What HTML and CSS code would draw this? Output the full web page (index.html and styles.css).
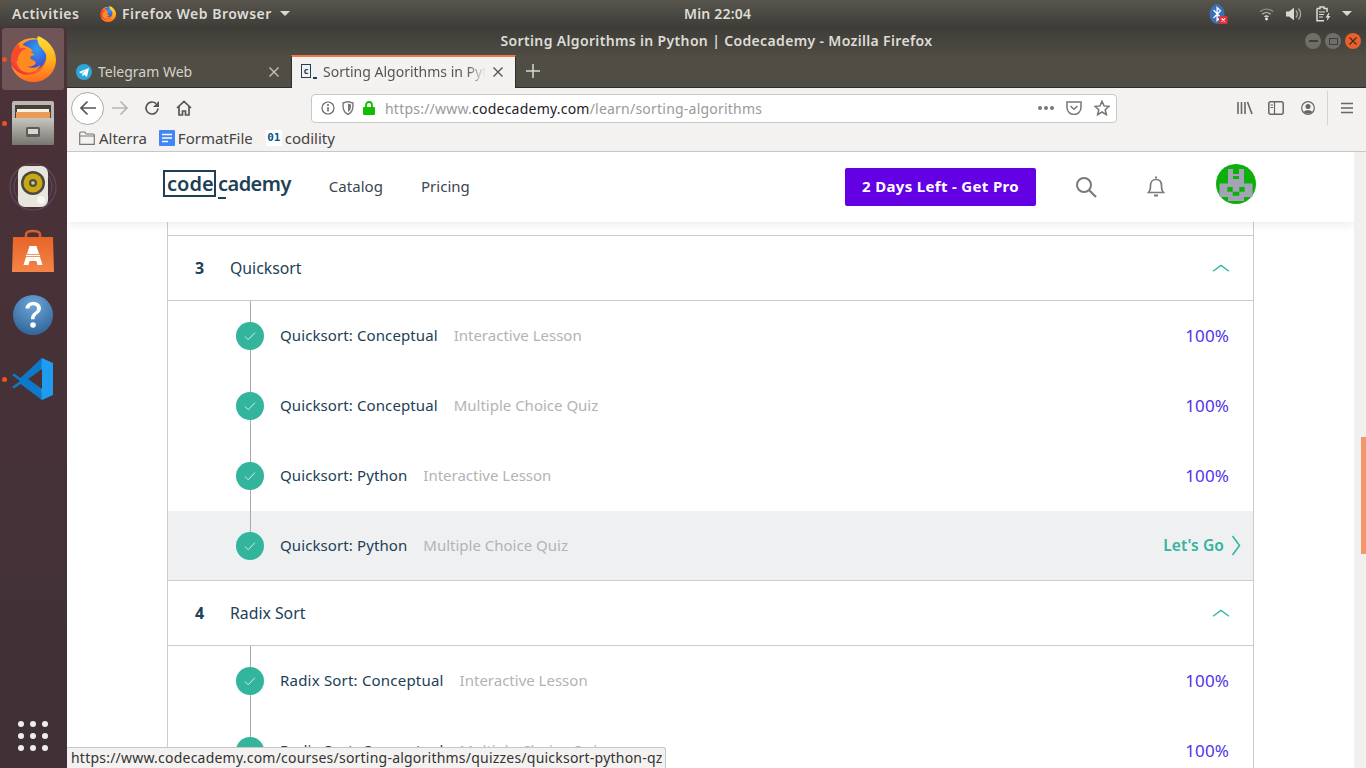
FILE: index.html
```html
<!DOCTYPE html>
<html lang="en">
<head>
<meta charset="utf-8">
<title>Sorting Algorithms in Python | Codecademy - Mozilla Firefox</title>
<link rel="stylesheet" href="styles.css">
</head>
<body>
<svg class="defs" width="0" height="0" aria-hidden="true">
  <defs>
    <linearGradient id="ffBody" x1="0.75" y1="0.1" x2="0.2" y2="1">
      <stop offset="0" stop-color="#ffb81e"/><stop offset="0.45" stop-color="#ff7a1f"/><stop offset="0.8" stop-color="#f5363c"/><stop offset="1" stop-color="#e0208a"/>
    </linearGradient>
    <linearGradient id="ffTail" x1="0.4" y1="0" x2="0.5" y2="1">
      <stop offset="0" stop-color="#ffe23a"/><stop offset="0.55" stop-color="#ffb01f"/><stop offset="1" stop-color="#ff6a1f"/>
    </linearGradient>
    <radialGradient id="ffBlue" cx="0.6" cy="0.3" r="0.8">
      <stop offset="0" stop-color="#2f9cf5"/><stop offset="0.6" stop-color="#3b5fd8"/><stop offset="1" stop-color="#4a2bb0"/>
    </radialGradient>
    <symbol id="firefox" viewBox="0 0 48 48">
      <circle cx="24" cy="25" r="23" fill="url(#ffBody)"/>
      <path d="M13 9c4-4 10-6 16-5 6 2 10 9 9 17-1 10-9 16-17 15-4-1-7-3-9-6 2 1 5 1 7 0 3-1 4-3 4-5-3-1-5-3-4-6 1-2 3-3 5-3-1-3-6-5-11-7z" fill="url(#ffBlue)"/>
      <path d="M29 0c9 3 19 12 19 25 0 12-10 23-23 23C14 48 5 42 1 30c5 8 13 12 22 10 10-2 16-10 15-19-1-5-5-8-8-12-1-3-2-6-1-9z" fill="url(#ffTail)"/>
      <path d="M13 15c5 0 11 2 13 5-3 0-5 1-5 3 1 2 5 2 6 5-1 4-7 5-10 3 4 3 11 3 15-1-2 6-9 9-15 8C10 37 6 30 7 24c0-3 3-7 6-9z" fill="#ff8a1f"/>
      <path d="M1 24C1 17 5 11 9 8c0 2 1 4 2 5 2-1 4-1 6 0-5 2-9 6-9 13-3 1-5-1-7-2z" fill="#f74a2c"/>
    </symbol>
    <symbol id="check" viewBox="0 0 16 16">
      <path d="M3 8.500l3.200 3.200L13 4.600" fill="none" stroke="#d5f0ea" stroke-width="1"/>
    </symbol>
    <symbol id="chev-up" viewBox="0 0 18 8">
      <path d="M1 7.200 9 1.400l8 5.800" fill="none" stroke="#2fb7a2" stroke-width="1.300"/>
    </symbol>
  </defs>
</svg>

<div class="desktop">
  <header class="topbar">
    <div class="top-left">
      <span class="activities">Activities</span>
      <span class="app-menu">
        <svg class="app-ff" width="16" height="16"><use href="#firefox"/></svg>
        <span>Firefox Web Browser</span>
        <i class="caret"></i>
      </span>
    </div>
    <div class="clock">Min 22:04</div>
    <div class="tray">
      <svg class="tray-bt" width="19" height="22" viewBox="0 0 19 22">
        <ellipse cx="8" cy="11" rx="7.500" ry="10" fill="#3a6fb5"/>
        <path d="M4.500 7l7 7.200-3.400 3.200V4.600l3.400 3.200-7 7.200" fill="none" stroke="#fff" stroke-width="1.300"/>
        <rect x="10" y="13" width="8.500" height="8" rx="1" fill="#e3303c"/>
        <path d="M12.500 15.500l3.500 3m0-3l-3.500 3" stroke="#fff" stroke-width="1.200"/>
      </svg>
      <svg class="tray-wifi" width="15" height="14" viewBox="0 0 16 14">
        <path d="M1 4.500c4-3.600 10-3.600 14 0" fill="none" stroke="#8d8c86" stroke-width="1.400"/>
        <path d="M3.500 7.300c2.600-2.300 6.400-2.300 9 0" fill="none" stroke="#b9b8b2" stroke-width="1.400"/>
        <path d="M5.800 10c1.300-1 3.100-1 4.400 0" fill="none" stroke="#d8d7d2" stroke-width="1.400"/>
        <circle cx="8" cy="12.300" r="1.500" fill="#eee"/>
      </svg>
      <svg class="tray-vol" width="16" height="14" viewBox="0 0 16 14">
        <path d="M0 4.500h3L8 .8v12.400L3 9.500H0z" fill="#d8d7d2"/>
        <path d="M10 3.500c1.500 2 1.500 5 0 7M12.500 1.500c2.500 3.300 2.500 7.700 0 11" fill="none" stroke="#a9a8a2" stroke-width="1.300"/>
      </svg>
      <svg class="tray-bat" width="15" height="16" viewBox="0 0 15 16">
        <path d="M1 2.500h3V1h4v1.500h3V6M8 14.800H1V2.500" fill="none" stroke="#dedcd7" stroke-width="1.500"/>
        <path d="M3 6h6M3 8.500h5M3 11h4" stroke="#dedcd7" stroke-width="1.200"/>
        <path d="M12.500 7l-3 4.500h2l-.8 3.500 3.800-5h-2.200l1.200-3z" fill="#dedcd7"/>
      </svg>
      <i class="caret tray-caret"></i>
    </div>
  </header>

  <div class="workspace">
    <nav class="dock">
      <div class="dock-item active">
        <i class="running"></i>
        <svg width="46" height="46"><use href="#firefox"/></svg>
      </div>
      <div class="dock-item">
        <i class="running"></i>
        <svg width="42" height="44" viewBox="0 0 42 44">
          <defs><linearGradient id="cab" x1="0" y1="0" x2="0" y2="1"><stop offset="0" stop-color="#c6c5c0"/><stop offset="1" stop-color="#77766f"/></linearGradient></defs>
          <rect x="0" y="0" width="42" height="43" rx="2" fill="#b9b8b3"/>
          <rect x="3" y="4" width="36" height="14" fill="#4a3f36"/>
          <rect x="5" y="8" width="32" height="3" fill="#f6f2e6"/>
          <rect x="4" y="11" width="34" height="7" fill="#e89c58"/>
          <rect x="0" y="17" width="42" height="27" rx="1" fill="url(#cab)"/>
          <rect x="14" y="26" width="14" height="10" rx="1.500" fill="#5d5c59"/>
          <rect x="16" y="28" width="10" height="5" fill="#d8d7d3"/>
        </svg>
      </div>
      <div class="dock-item">
        <svg width="48" height="48" viewBox="0 0 48 48">
          <circle cx="24" cy="24" r="23" fill="none" stroke="#5c4a63" stroke-width="1.200"/>
          <circle cx="24" cy="24" r="19" fill="none" stroke="#5a5068" stroke-width="1"/>
          <rect x="9" y="3" width="30" height="41" rx="7" fill="#e7e5dc"/>
          <circle cx="24" cy="20" r="12" fill="#4a4a42"/>
          <circle cx="24" cy="20" r="9.500" fill="#c9a815"/>
          <circle cx="24" cy="20" r="4" fill="#55503a"/>
          <circle cx="24" cy="20" r="1.800" fill="#c9c8bb"/>
          <circle cx="32" cy="37" r="4" fill="#f7f6f1"/>
        </svg>
      </div>
      <div class="dock-item">
        <svg width="44" height="44" viewBox="0 0 44 44">
          <defs><linearGradient id="bag" x1="0" y1="0" x2="0" y2="1"><stop offset="0" stop-color="#e8642a"/><stop offset="1" stop-color="#f38547"/></linearGradient></defs>
          <path d="M15 10V5.500C15 3 17 2 22 2s7 1 7 3.500V10" fill="none" stroke="#d9602c" stroke-width="2.500"/>
          <path d="M2 8h40l1 35H1z" fill="url(#bag)"/>
          <path d="M18.500 17h7l6 19h-5l-1-4h-7l-1 4h-5z" fill="#fff"/>
          <rect x="13" y="25" width="19" height="3" fill="#f07a3c"/>
          <rect x="15" y="25.800" width="14" height="1.400" fill="#fff"/>
        </svg>
      </div>
      <div class="dock-item">
        <svg width="44" height="44" viewBox="0 0 44 44">
          <defs><radialGradient id="help" cx="0.5" cy="0.25" r="0.85"><stop offset="0" stop-color="#6ea6da"/><stop offset="1" stop-color="#2a5d91"/></radialGradient></defs>
          <circle cx="22" cy="22" r="20" fill="url(#help)"/>
          <path d="M14.500 15.500c0-4 3.500-6.500 7.800-6.500 4.500 0 7.700 2.500 7.700 6.300 0 5.700-6.500 5.200-6.500 11h-3.500c-.5-7 6-6.600 6-10.800 0-2-1.600-3.300-3.800-3.300-2.300 0-3.900 1.300-3.900 3.300z" fill="#fff"/>
          <circle cx="22" cy="32" r="2.800" fill="#fff"/>
        </svg>
      </div>
      <div class="dock-item">
        <i class="running"></i>
        <svg width="44" height="44" viewBox="0 0 44 44">
          <path d="M31 1 42 6v32l-11 5-20-19z" fill="#1f9cf0"/>
          <path d="M31 1 9.500 21 3 16.500 1 18l8 6-8 6 2 1.500L9.500 27 31 43l-1-12-13-9 13-9z" fill="#0f79c9"/>
          <path d="M31 12 17 22l14 10z" fill="#4a3037"/>
        </svg>
      </div>
      <div class="apps-grid" aria-label="Show applications">
        <i></i><i></i><i></i><i></i><i></i><i></i><i></i><i></i><i></i>
      </div>
    </nav>

    <div class="window">
      <div class="titlebar">
        <span class="title">Sorting Algorithms in Python | Codecademy - Mozilla Firefox</span>
        <div class="win-buttons">
          <span class="win-btn"><i class="min"></i></span>
          <span class="win-btn"><i class="max"></i></span>
          <span class="win-btn close">
            <svg width="10" height="10" viewBox="0 0 10 10"><path d="M1.500 1.500l7 7m0-7l-7 7" stroke="#4a2a1a" stroke-width="1.200"/></svg>
          </span>
        </div>
      </div>

      <div class="tabbar">
        <div class="tab">
          <svg width="16" height="16" viewBox="0 0 16 16"><circle cx="8" cy="8" r="8" fill="#2ea6da"/><path d="M3 8l10-4-2 9-3-2.300-1.500 1.500-.3-2.600L11 5.500 5 9.500z" fill="#fff"/></svg>
          <span class="tab-text">Telegram Web</span>
          <svg class="tab-x" width="12" height="12" viewBox="0 0 12 12"><path d="M1.500 1.500l9 9m0-9l-9 9" stroke="#c3c2bd" stroke-width="1.400"/></svg>
        </div>
        <div class="tab current">
          <span class="favicon-cc"><b>c</b></span>
          <span class="tab-text fade">Sorting Algorithms in Pyt</span>
          <svg class="tab-x" width="12" height="12" viewBox="0 0 12 12"><path d="M1.500 1.500l9 9m0-9l-9 9" stroke="#555" stroke-width="1.400"/></svg>
        </div>
        <svg class="newtab" width="14" height="14" viewBox="0 0 14 14"><path d="M7 0v14M0 7h14" stroke="#d8d7d2" stroke-width="1.500"/></svg>
      </div>

      <div class="navbar">
        <span class="back">
          <svg width="18" height="16" viewBox="0 0 18 16"><path d="M17 8H2M8.500 1.500 2 8l6.500 6.500" fill="none" stroke="#555" stroke-width="1.700"/></svg>
        </span>
        <svg class="nav-ic forward" width="18" height="16" viewBox="0 0 18 16"><path d="M1 8h15M9.500 1.500 16 8l-6.500 6.500" fill="none" stroke="#b5b5b2" stroke-width="1.700"/></svg>
        <svg class="nav-ic reload" width="16" height="16" viewBox="0 0 16 16"><path d="M14 8.500A6 6 0 1 1 12 3.500" fill="none" stroke="#555" stroke-width="1.700"/><path d="M15 1v6H9z" fill="#555"/></svg>
        <svg class="nav-ic home" width="16" height="16" viewBox="0 0 16 16"><path d="M1 8l7-6.500L15 8M3 6.500V15h3.500v-4h3v4H13V6.500" fill="none" stroke="#555" stroke-width="1.700"/></svg>
        <div class="urlbar">
          <svg width="14" height="14" viewBox="0 0 14 14"><circle cx="7" cy="7" r="6" fill="none" stroke="#666" stroke-width="1.200"/><path d="M7 6v4.500" stroke="#666" stroke-width="1.500"/><circle cx="7" cy="4" r="1" fill="#666"/></svg>
          <svg class="shield" width="12" height="14" viewBox="0 0 12 14"><path d="M1 2l5-1.500L11 2c0 5 0 9-5 11.500C1 11 1 7 1 2z" fill="none" stroke="#777" stroke-width="1.400"/><path d="M6 2.500 9 3.500c0 3 0 5.500-3 7.500z" fill="#777"/></svg>
          <svg class="lock" width="12" height="14" viewBox="0 0 12 14"><path d="M3 6.500V4a3 3 0 0 1 6 0v2.500" fill="none" stroke="#12bc00" stroke-width="1.800"/><rect y="6" width="12" height="8" rx="1" fill="#12bc00"/></svg>
          <span class="url"><span class="dim">https://www.</span>codecademy.com<span class="dim">/learn/sorting-algorithms</span></span>
          <span class="url-actions">
            <span class="dots"><i></i><i></i><i></i></span>
            <svg width="16" height="14" viewBox="0 0 16 14"><path d="M1 1h14v5.500a7 7 0 0 1-14 0z" fill="none" stroke="#777" stroke-width="1.500"/><path d="M4.500 5 8 8.300 11.500 5" fill="none" stroke="#777" stroke-width="1.500"/></svg>
            <svg width="16" height="16" viewBox="0 0 16 16"><path d="M8 1.300l2 4.600 5 .5-3.800 3.300 1.200 5L8 12l-4.400 2.700 1.200-5L1 6.400l5-.5z" fill="none" stroke="#777" stroke-width="1.500"/></svg>
          </span>
        </div>
        <div class="nav-right">
          <svg width="16" height="14" viewBox="0 0 16 14"><path d="M1 1v12M4.500 1v12M8 1v12M10.500 1l4.500 12" stroke="#666" stroke-width="1.600" fill="none"/></svg>
          <svg width="16" height="14" viewBox="0 0 16 14"><rect x=".8" y=".8" width="14.400" height="12.400" rx="2" fill="none" stroke="#666" stroke-width="1.500"/><path d="M6.500 1v12" stroke="#666" stroke-width="1.200"/><path d="M2.500 4h2.500M2.500 6.500h2.500" stroke="#666"/></svg>
          <svg class="account" width="14" height="14" viewBox="0 0 14 14"><circle cx="7" cy="7" r="6.300" fill="none" stroke="#666" stroke-width="1.200"/><circle cx="7" cy="5.500" r="2.500" fill="#666"/><path d="M2.800 11c1-2.500 7.400-2.500 8.400 0-2 2-6.400 2-8.400 0z" fill="#666"/></svg>
          <i class="sep"></i>
          <svg width="12" height="12" viewBox="0 0 12 12"><path d="M0 1.500h12M0 6h12M0 10.500h12" stroke="#666" stroke-width="1.600"/></svg>
        </div>
      </div>

      <div class="bookmarks">
        <span class="bm">
          <svg class="bm-folder" width="16" height="14" viewBox="0 0 16 14"><path d="M.7 13.300V2.500c0-1 .5-1.500 1.500-1.500h3.500l1.500 2h7c.6 0 1.100.5 1.100 1.200v9.100z" fill="none" stroke="#777" stroke-width="1.200"/><path d="M1 5h14" stroke="#777"/></svg>
          Alterra
        </span>
        <span class="bm">
          <svg width="16" height="16" viewBox="0 0 16 16"><rect width="16" height="16" rx="1" fill="#4285f4"/><path d="M3 4.500h10M3 8h10M3 11.500h6" stroke="#fff" stroke-width="1.500"/></svg>
          FormatFile
        </span>
        <span class="bm">
          <span class="bm-01">01</span>
          codility
        </span>
      </div>

      <div class="viewport">
        <main class="page">
          <header class="site-header">
            <div class="logo"><span class="logo-box">code</span><span class="logo-rest">cademy</span></div>
            <a class="site-link first">Catalog</a>
            <a class="site-link">Pricing</a>
            <a class="cta">2 Days Left - Get Pro</a>
            <svg class="search" width="22" height="22" viewBox="0 0 22 22"><circle cx="9" cy="9" r="7" fill="none" stroke="#7a7a7a" stroke-width="2"/><path d="M14 14l7 7" stroke="#7a7a7a" stroke-width="2.200"/></svg>
            <svg class="bell" width="18" height="22" viewBox="0 0 18 22"><path d="M1.500 16.500c2-2 2-4 2-7C3.500 6 5.500 3.500 9 3.500s5.500 2.500 5.500 6c0 3 0 5 2 7z" fill="none" stroke="#7a7a7a" stroke-width="1.700"/><path d="M8 1.500h2M7 19.500h4" stroke="#7a7a7a" stroke-width="2"/></svg>
            <svg class="avatar" width="40" height="40" viewBox="0 0 40 40">
              <circle cx="20" cy="20" r="20" fill="#0bb00b"/>
              <path d="M12 5h5v5h6V5h5v14.500h8.500V33H28v4H12v-4H3.500V19.500H12z" fill="#a3a3b5"/>
              <path d="M17 12h6v3h-6zM11.300 23h5.400v4.700h-5.400zM23.300 23h5.400v4.700h-5.400zM16.700 27.700h6.600v4h-6.600z" fill="#0bb00b"/>
            </svg>
          </header>

          <div class="card">
            <section class="module">
              <div class="module-head"><b class="num">3</b><span class="name">Quicksort</span><svg class="chev" width="18" height="8"><use href="#chev-up"/></svg></div>
              <div class="lesson"><span class="tick"><svg width="16" height="16"><use href="#check"/></svg></span><span class="l-title">Quicksort: Conceptual</span><span class="l-type">Interactive Lesson</span><span class="pct">100%</span></div>
              <div class="lesson"><span class="tick"><svg width="16" height="16"><use href="#check"/></svg></span><span class="l-title">Quicksort: Conceptual</span><span class="l-type">Multiple Choice Quiz</span><span class="pct">100%</span></div>
              <div class="lesson"><span class="tick"><svg width="16" height="16"><use href="#check"/></svg></span><span class="l-title">Quicksort: Python</span><span class="l-type">Interactive Lesson</span><span class="pct">100%</span></div>
              <div class="lesson hover last"><span class="tick"><svg width="16" height="16"><use href="#check"/></svg></span><span class="l-title">Quicksort: Python</span><span class="l-type">Multiple Choice Quiz</span><span class="go"><span class="go-text">Let's Go</span><svg width="10" height="21" viewBox="0 0 10 21"><path d="M1.500 1 8.500 10.500l-7 9.500" fill="none" stroke="#2fb7a2" stroke-width="1.600"/></svg></span></div>
            </section>
            <section class="module">
              <div class="module-head"><b class="num">4</b><span class="name">Radix Sort</span><svg class="chev" width="18" height="8"><use href="#chev-up"/></svg></div>
              <div class="lesson"><span class="tick"><svg width="16" height="16"><use href="#check"/></svg></span><span class="l-title wide">Radix Sort: Conceptual</span><span class="l-type">Interactive Lesson</span><span class="pct">100%</span></div>
              <div class="lesson"><span class="tick"><svg width="16" height="16"><use href="#check"/></svg></span><span class="l-title wide">Radix Sort: Conceptual</span><span class="l-type">Multiple Choice Quiz</span><span class="pct">100%</span></div>
            </section>
          </div>
        </main>
        <div class="scrollbar"><i class="thumb"></i></div>
        <div class="status-tip">https://www.codecademy.com/courses/sorting-algorithms/quizzes/quicksort-python-qz</div>
      </div>
    </div>
  </div>
</div>
</body>
</html>
```

FILE: styles.css
```css
* { box-sizing: border-box; }
html, body { margin: 0; padding: 0; height: 100%; overflow: hidden; }
body { font-family: "Noto Sans", "Liberation Sans", sans-serif; background: #fff; }
.defs { display: block; height: 0; }
.desktop { display: flex; flex-direction: column; width: 1366px; height: 768px; overflow: hidden; }

.topbar { flex: 0 0 27px; display: grid; grid-template-columns: 684px auto 1fr; align-items: center; background: linear-gradient(#57554d, #3e3d38); color: #dfdcd6; font-size: 14px; font-weight: 600; }
.top-left { display: flex; align-items: center; padding-left: 12px; letter-spacing: .5px; }
.activities { width: 88px; }
.app-menu { display: flex; align-items: center; gap: 6px; }
.caret { display: inline-block; width: 0; height: 0; border-left: 5px solid transparent; border-right: 5px solid transparent; border-top: 5px solid #d8d7d2; margin-left: 2px; }
.clock { font-size: 14px; letter-spacing: .2px; }
.tray { display: flex; align-items: center; justify-content: flex-end; padding-right: 14px; }
.tray-bt { margin-right: 31px; }
.tray-wifi { margin-right: 12px; }
.tray-vol { margin-right: 14px; }
.tray-bat { margin-right: 11px; }
.tray-caret { margin-left: 0; }

.workspace { flex: 1; display: flex; min-height: 0; }
.dock { position: relative; flex: 0 0 67px; display: flex; flex-direction: column; align-items: center; background: linear-gradient(#4c3138, #3f3136); padding: 1px 0 0; }
.dock-item { position: relative; flex: 0 0 62px; width: 62px; margin: 0 3px 2px 2px; display: flex; align-items: center; justify-content: center; border-radius: 3px; }
.dock-item.active { background: #6f5558; }
.running { position: absolute; left: 0; top: 29px; width: 5px; height: 5px; border-radius: 50%; background: #e95420; }
.apps-grid { position: absolute; left: 18px; bottom: 17px; display: grid; grid-template-columns: repeat(3, 6px); gap: 6px; }
.apps-grid i { width: 6px; height: 6px; border-radius: 50%; background: #eee; }

.window { flex: 1; min-width: 0; display: flex; flex-direction: column; }
.titlebar { flex: 0 0 28px; position: relative; display: flex; align-items: center; justify-content: center; padding-bottom: 2px; background: linear-gradient(#3e3d38, #4e4b43); color: #dfdcd6; font-size: 14px; font-weight: 600; letter-spacing: .35px; }
.win-buttons { position: absolute; right: 5px; top: 6px; display: flex; gap: 4px; }
.win-btn { width: 16px; height: 16px; border-radius: 50%; background: #6f6e68; display: flex; align-items: center; justify-content: center; }
.win-btn.close { background: #e9602c; }
.min { width: 9px; height: 1.500px; background: #3f3e3a; }
.max { width: 9px; height: 7px; border: 1px solid #3f3e3a; }

.tabbar { flex: 0 0 33px; min-height: 0; display: flex; align-items: stretch; background: #504d45; border-bottom: 1px solid #2f2e2a; font-size: 14px; }
.tab { width: 224px; display: flex; align-items: center; padding: 1px 11px 0 9px; gap: 6px; color: #d4d2cc; }
.tab.current { position: relative; z-index: 1; width: 225px; height: 33px; padding-top: 0; padding-bottom: 2px; background: #f3f2f0; color: #555; border-top: 2px solid #f0784a; border-left: 1px solid #2f2e2a; border-right: 1px solid #2f2e2a; }
.tab-text { flex: 1; white-space: nowrap; overflow: hidden; }
.fade { -webkit-mask-image: linear-gradient(to right, #000 88%, transparent); mask-image: linear-gradient(to right, #000 88%, transparent); }
.tab-x { flex: none; }
.favicon-cc { flex: none; width: 16px; height: 16px; position: relative; display: flex; }
.favicon-cc b { width: 10px; height: 14px; border: 1.500px solid #204056; font-size: 9px; line-height: 11px; text-align: center; color: #204056; }
.favicon-cc::after { content: ""; position: absolute; left: 12px; bottom: 1px; width: 4px; height: 1.500px; background: #204056; }
.newtab { align-self: center; margin-left: 10px; }

.navbar { flex: 0 0 40px; display: flex; align-items: center; background: #f3f2f0; padding-left: 4px; }
.back { width: 33px; height: 33px; border-radius: 50%; background: #fff; border: 1px solid #aaa9a6; display: flex; align-items: center; justify-content: center; }
.nav-ic { flex: none; }
.forward { margin-left: 7px; }
.reload { margin-left: 15px; }
.home { margin-left: 16px; }
.urlbar { width: 806px; height: 29px; margin-left: 119px; background: #fff; border: 1px solid #c9c8c5; border-radius: 4px; display: flex; align-items: center; padding: 0 6px 0 9px; font-size: 14px; }
.shield { margin-left: 7px; }
.lock { margin-left: 9px; }
.url { margin-left: 10px; color: #1f2328; white-space: nowrap; letter-spacing: .22px; }
.dim { color: #9a9a9a; }
.url-actions { margin-left: auto; display: flex; align-items: center; gap: 12px; }
.dots { display: flex; gap: 2px; }
.dots i { width: 4px; height: 4px; border-radius: 50%; background: #777; }
.nav-right { flex: 1; display: flex; align-items: center; gap: 15px; padding-left: 120px; }
.account { margin-left: 2px; }
.sep { width: 1px; height: 34px; background: #d5d4d1; margin: 0 -2px 0 -3px; }

.bookmarks { flex: 0 0 24px; display: flex; align-items: center; gap: 12px; background: #f3f2f0; border-bottom: 1px solid #c8c7c4; padding: 0 0 3px 12px; font-size: 15px; color: #444; }
.bm { display: flex; align-items: center; gap: 3px; }
.bm-folder { margin-right: 1px; }
.bm-01 { width: 16px; height: 16px; margin-left: 1px; background: #fff; color: #00588a; font: 700 11px/16px "DejaVu Sans Mono", monospace; text-align: center; }

.viewport { position: relative; flex: 1; min-height: 0; display: flex; overflow: hidden; background: #fff; }
.page { flex: 1; min-width: 0; overflow: hidden; }
.site-header { position: relative; z-index: 2; height: 70px; display: flex; align-items: center; padding: 0 98px 0 96px; background: #fff; box-shadow: 0 2px 10px rgba(0,0,0,.09); color: #3a4650; }
.logo { display: flex; margin-bottom: 7px; font-size: 20px; font-weight: 600; line-height: 23px; color: #204056; }
.logo-box { width: 53px; height: 27px; border: 2px solid #204056; padding-left: 2px; }
.logo-rest { position: relative; margin-left: 2px; padding-top: 2px; letter-spacing: -.55px; }
.logo-rest::after { content: ""; position: absolute; left: 0; bottom: -2px; width: 8px; height: 2px; background: #204056; }
.site-link { font-size: 15px; padding-bottom: 2px; letter-spacing: .03px; }
.site-link.first { margin-left: 38px; }
.site-link + .site-link { margin-left: 38px; }
.cta { margin-left: auto; width: 191px; height: 38px; padding-bottom: 2px; display: flex; align-items: center; justify-content: center; background: #6400e4; color: #fff; font-size: 15px; font-weight: 700; letter-spacing: .33px; border-radius: 2px; }
.search { margin-left: 39px; }
.bell { margin-left: 50px; }
.avatar { margin-left: 51px; margin-bottom: 6px; }

.card { margin: 0 100px 0 100px; border-left: 1px solid #ccc; border-right: 1px solid #ccc; padding-top: 13px; color: #204056; }
.module-head { height: 66px; display: flex; align-items: center; border-top: 1px solid #ccc; border-bottom: 1px solid #ccc; padding: 0 23px 0 27px; font-size: 15.800px; }
.module + .module .module-head { border-top: 0; height: 65px; }
.num { width: 35px; font-size: 16px; }
.name { flex: 1; }
.lesson { position: relative; height: 70px; display: flex; align-items: center; padding: 0 24px 0 68px; font-size: 15px; }
.lesson::before { content: ""; position: absolute; left: 81.500px; top: 0; bottom: 0; width: 1px; background: #aaa; }
.lesson.last::before { bottom: 50%; }
.lesson.last { border-bottom: 1px solid #ccc; }
.hover { background: #eff0f2; }
.tick { position: relative; width: 28px; height: 28px; border-radius: 50%; background: #33b49d; display: flex; align-items: center; justify-content: center; margin-right: 16px; }
.l-title { margin-right: 16px; padding-bottom: 2px; letter-spacing: .1px; }
.l-title.wide { letter-spacing: .2px; }
.l-type { padding-bottom: 2px; color: #b3b3b3; }
.pct { margin-left: auto; padding-bottom: 2px; color: #4f35e8; font-size: 17px; letter-spacing: .1px; }
.go { margin-left: auto; margin-right: -12px; display: flex; align-items: center; gap: 7px; font-weight: 600; font-size: 15.500px; letter-spacing: .1px; color: #33b49d; }
.go-text { padding-bottom: 2px; }

.scrollbar { position: relative; flex: 0 0 12px; background: #f1f0ee; }
.thumb { position: absolute; right: 0; top: 285px; width: 5px; height: 117px; background: #f4956a; }
.status-tip { position: absolute; z-index: 3; left: 0; bottom: 0; height: 21px; width: 599px; padding: 0 4px; background: #f3f2f0; border: 1px solid #c8c7c4; border-left: 0; border-bottom: 0; border-top-right-radius: 3px; font-size: 14px; letter-spacing: .22px; line-height: 19px; color: #333; white-space: nowrap; }
```
